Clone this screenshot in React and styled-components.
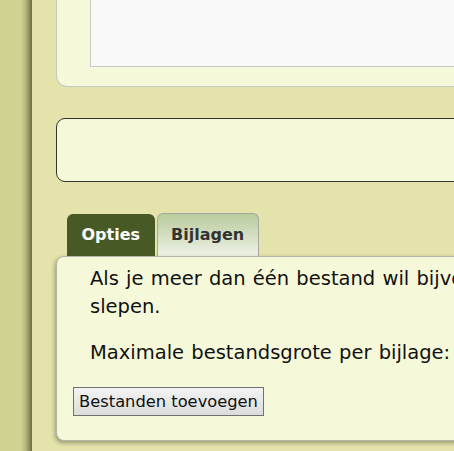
import styled, { createGlobalStyle } from 'styled-components';

const GlobalStyle = createGlobalStyle`
  html, body {
    margin: 0;
    padding: 0;
    overflow: hidden;
    background: #e4e3ab;
  }
  body {
    font-family: "DejaVu Sans", Verdana, sans-serif;
  }
`;

const Page = styled.div`
  display: flex;
  width: 454px;
  height: 451px;
  overflow: hidden;
`;

const SideStrip = styled.div`
  flex: 0 0 32px;
  background: linear-gradient(90deg, #cfd290 0%, #cfd290 66%, #b4b67c 80%, #8a8c5c 92%, #676a42 100%);
`;

const Main = styled.div`
  flex: 1;
  min-width: 0;
  background: #e4e3ab;
  padding-left: 24px;
  display: flex;
  flex-direction: column;
  overflow: hidden;
`;

const TopPanel = styled.div`
  width: 520px;
  height: 87px;
  box-sizing: border-box;
  background: #f5f9da;
  border-left: 1px solid #c9c9c4;
  border-bottom: 1px solid #c9c9c4;
  border-bottom-left-radius: 11px;
  padding-left: 33px;
`;

const Preview = styled.div`
  height: 67px;
  box-sizing: border-box;
  background: #f9f9f9;
  border-left: 1px solid #c9c9c9;
  border-bottom: 1px solid #c9c9c9;
`;

const InputBox = styled.div`
  margin-top: 31px;
  width: 520px;
  height: 64px;
  box-sizing: border-box;
  background: #f5f9da;
  border: 1px solid #333529;
  border-radius: 9px;
`;

const TabRow = styled.div`
  margin-top: 31px;
  padding-left: 11px;
  display: flex;
  align-items: flex-end;
  gap: 2px;
  height: 43px;
`;

const Tab = styled.div`
  box-sizing: border-box;
  height: ${(p) => (p.$active ? '42px' : '43px')};
  padding: 0 ${(p) => (p.$active ? '14.5px' : '13.5px')} 2px;
  display: flex;
  align-items: center;
  font-size: 16px;
  font-weight: bold;
  border-radius: 6px 6px 0 0;
  color: ${(p) => (p.$active ? '#ffffff' : '#333333')};
  background: ${(p) =>
    p.$active ? '#475a26' : 'linear-gradient(180deg, #b8cb9d 0%, #d6e0c4 55%, #eef2e6 100%)'};
  border: ${(p) => (p.$active ? 'none' : '1px solid #a5a8a0')};
  border-bottom: none;
`;

const Panel = styled.div`
  width: 780px;
  height: 185px;
  box-sizing: border-box;
  background: #f5f9da;
  border: 1px solid #b4b6a8;
  border-radius: 8px;
  box-shadow: -1px 2px 4px rgba(60, 60, 40, 0.45);
  padding: 8px 0 0 16px;
`;

const Paragraph = styled.p`
  margin: 0 0 18px 0;
  padding-left: 17px;
  font-size: 19.5px;
  word-spacing: 1px;
  line-height: 28px;
  color: #111111;
  width: 720px;
`;

const AddButton = styled.button`
  margin-top: 2px;
  height: 29px;
  width: 191px;
  box-sizing: border-box;
  padding: 0 5px;
  font-family: "DejaVu Sans", Verdana, sans-serif;
  font-size: 16.3px;
  color: #111111;
  background: linear-gradient(180deg, #f3f3f3 0%, #dcdcdc 100%);
  border: 1px solid #707070;
  border-radius: 0;
  white-space: nowrap;
`;

export default function App() {
  return (
    <>
      <GlobalStyle />
      <Page>
        <SideStrip />
        <Main>
          <TopPanel>
            <Preview />
          </TopPanel>
          <InputBox />
          <TabRow>
            <Tab $active>Opties</Tab>
            <Tab>Bijlagen</Tab>
          </TabRow>
          <Panel>
            <Paragraph>
              Als je meer dan één bestand wil bijvoegen, kun je ze ook naar dit vak slepen.
            </Paragraph>
            <Paragraph>Maximale bestandsgrote per bijlage: 10 MB</Paragraph>
            <AddButton>Bestanden toevoegen</AddButton>
          </Panel>
        </Main>
      </Page>
    </>
  );
}
